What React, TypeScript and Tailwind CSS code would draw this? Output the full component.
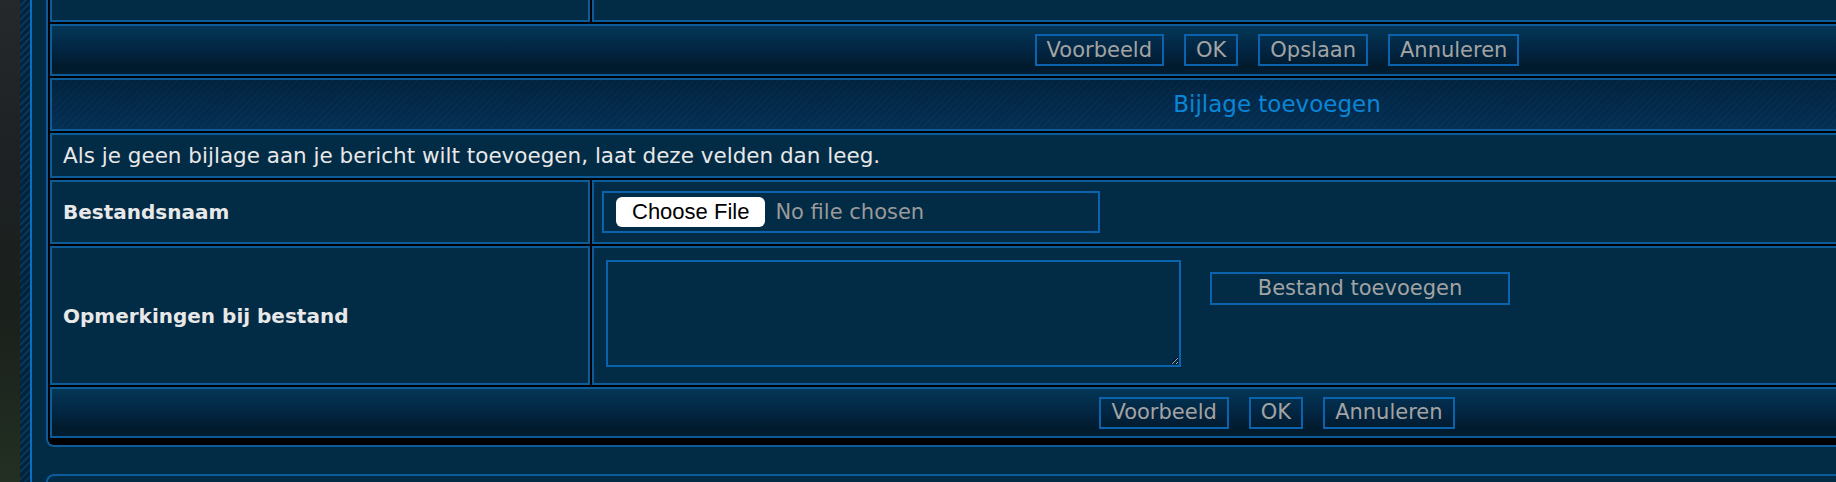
import React from "react";

const btn =
  "h-[32px] px-[10px] border-2 border-[#0b63ae] text-[21px] leading-none text-[#a3a3a3] flex items-center justify-center bg-transparent";

const gradRow =
  "border-2 border-[#0c5c9a] bg-[linear-gradient(to_bottom,#043656,#022440_55%,#011a2c_85%,#021d31)] flex items-center justify-center gap-[20px]";

const cell = "border-2 border-[#0c5c9a] bg-[#022b46]";

export default function App() {
  return (
    <div className="w-[1836px] h-[482px] overflow-hidden flex font-['DejaVu_Sans',sans-serif]">
      <div className="w-[20px] shrink-0 bg-[linear-gradient(to_bottom,#25292c,#1d2124_35%,#1a201b_65%,#233023)]" />
      <div className="w-[10px] shrink-0 bg-[repeating-linear-gradient(135deg,#03233b_0px,#03233b_3px,#06365a_3px,#06365a_5px)]" />
      <div className="flex-1 border-l-2 border-[#0a6fc0] bg-[#022b46] pl-[14px] overflow-hidden">
        <div className="w-[2462px] flex flex-col">
          <div className="border-x-2 border-b-2 border-[#0c5c9a] rounded-b-[8px] bg-black px-[2px] pb-[7px] flex flex-col gap-[2px]">
            {/* partial top row */}
            <div className="h-[22px] flex gap-[2px]">
              <div className="w-[540px] border-x-2 border-b-2 border-[#0c5c9a] bg-[#022b46]" />
              <div className="flex-1 border-x-2 border-b-2 border-[#0c5c9a] bg-[#022b46]" />
            </div>

            {/* buttons row */}
            <div className={`h-[52px] ${gradRow}`}>
              <button className={btn}>Voorbeeld</button>
              <button className={btn}>OK</button>
              <button className={btn}>Opslaan</button>
              <button className={btn}>Annuleren</button>
            </div>

            {/* header */}
            <div className="h-[53px] border-2 border-[#0c5c9a] bg-[linear-gradient(to_bottom,rgba(2,30,52,0.5),rgba(6,58,98,0.35)),repeating-linear-gradient(135deg,#03284a_0px,#03284a_3px,#052f53_3px,#052f53_5px)] flex items-center justify-center">
              <span className="text-[23px] text-[#0a86d8] leading-none">Bijlage toevoegen</span>
            </div>

            {/* info text */}
            <div className={`h-[45px] ${cell} flex items-center px-[11px]`}>
              <span className="text-[21.5px] text-[#e8e8e8] leading-none">
                Als je geen bijlage aan je bericht wilt toevoegen, laat deze velden dan leeg.
              </span>
            </div>

            {/* Bestandsnaam */}
            <div className="h-[64px] flex gap-[2px]">
              <div className={`w-[540px] ${cell} flex items-center px-[11px]`}>
                <span className="text-[20px] font-bold text-[#e8e8e8] leading-none">Bestandsnaam</span>
              </div>
              <div className={`flex-1 ${cell} pl-[8px] pt-[9px]`}>
                <div className="w-[498px] h-[42px] border-2 border-[#0b63ae] flex items-center pl-[12px] gap-[10px]">
                  <span className="h-[30px] px-[16px] bg-white rounded-[6px] text-black text-[22px] leading-none flex items-center font-['Liberation_Sans',sans-serif]">
                    Choose File
                  </span>
                  <span className="text-[21px] text-[#9a9a9a] leading-none">No file chosen</span>
                </div>
              </div>
            </div>

            {/* Opmerkingen */}
            <div className="h-[139px] flex gap-[2px]">
              <div className={`w-[540px] ${cell} flex items-center px-[11px]`}>
                <span className="text-[20px] font-bold text-[#e8e8e8] leading-none">Opmerkingen bij bestand</span>
              </div>
              <div className={`flex-1 ${cell} pl-[12px] pt-[12px] flex items-start`}>
                <textarea className="w-[575px] h-[107px] border-2 border-[#0b63ae] bg-transparent text-[#e6e6e6] resize outline-none" />
                <button className="ml-[29px] mt-[12px] w-[300px] h-[33px] border-2 border-[#0b63ae] text-[21px] leading-none text-[#a3a3a3] flex items-center justify-center">
                  Bestand toevoegen
                </button>
              </div>
            </div>

            {/* bottom buttons */}
            <div className={`h-[51px] ${gradRow}`}>
              <button className={btn}>Voorbeeld</button>
              <button className={btn}>OK</button>
              <button className={btn}>Annuleren</button>
            </div>
          </div>

          <div className="h-[27px]" />
          <div className="h-[20px] border-x-2 border-t-2 border-[#0c5c9a] rounded-t-[8px] bg-[#022b46]" />
        </div>
      </div>
    </div>
  );
}
